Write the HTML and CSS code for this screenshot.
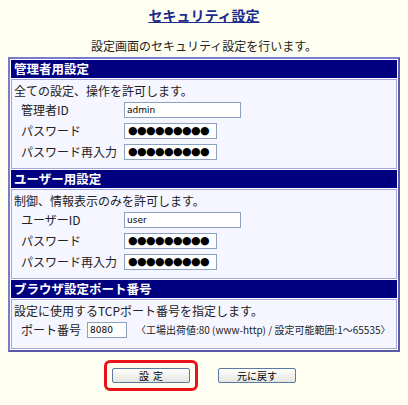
FILE: index.html
```html
<!DOCTYPE html>
<html lang="ja">
<head>
    <meta charset="UTF-8">
    <title>セキュリティ設定</title>
    <link rel="stylesheet" href="styles.css">
</head>
<body>
    <div class="page">
        <h1 class="title">セキュリティ設定</h1>
        <p class="lead">設定画面のセキュリティ設定を行います。</p>

        <div class="panel">
            <div class="sec-head">管理者用設定</div>
            <div class="sec-body">
                <p class="desc">全ての設定、操作を許可します。</p>
                <div class="row">
                    <span class="label">管理者ID</span>
                    <input type="text" class="inp wide" value="admin">
                </div>
                <div class="row">
                    <span class="label">パスワード</span>
                    <input type="text" class="inp pw" value="●●●●●●●●●">
                </div>
                <div class="row">
                    <span class="label">パスワード再入力</span>
                    <input type="text" class="inp pw" value="●●●●●●●●●">
                </div>
            </div>

            <div class="sec-head">ユーザー用設定</div>
            <div class="sec-body">
                <p class="desc">制御、情報表示のみを許可します。</p>
                <div class="row">
                    <span class="label">ユーザーID</span>
                    <input type="text" class="inp wide" value="user">
                </div>
                <div class="row">
                    <span class="label">パスワード</span>
                    <input type="text" class="inp pw" value="●●●●●●●●●">
                </div>
                <div class="row">
                    <span class="label">パスワード再入力</span>
                    <input type="text" class="inp pw" value="●●●●●●●●●">
                </div>
            </div>

            <div class="sec-head">ブラウザ設定ポート番号</div>
            <div class="sec-body short">
                <p class="desc">設定に使用するTCPポート番号を指定します。</p>
                <div class="row">
                    <span class="label port-label">ポート番号</span>
                    <input type="text" class="inp port" value="8080">
                    <span class="note">〈工場出荷値:80 (www-http) / 設定可能範囲:1～65535〉</span>
                </div>
            </div>
        </div>

        <div class="btn-group">
            <span class="highlight"><button type="button" class="btn spaced">設 定</button></span>
            <button type="button" class="btn">元に戻す</button>
        </div>
    </div>
</body>
</html>
```

FILE: styles.css
```css
* {
    margin: 0;
    padding: 0;
    box-sizing: border-box;
}

body {
    font-family: "Noto Sans CJK JP", "DejaVu Sans", sans-serif;
    font-size: 12px;
    color: #222;
    background: #fefff0;
}

.page {
    width: 408px;
    padding: 0 8px;
}

.title {
    text-align: center;
    font-size: 14px;
    font-weight: bold;
    color: #1c2a8c;
    text-decoration: underline;
    line-height: 18px;
    padding-top: 6px;
}

.lead {
    text-align: center;
    line-height: 16px;
    margin-top: 14px;
    margin-bottom: 3px;
}

.panel {
    border: 2px solid #7a7acc;
    border-right-color: #5a5aa8;
    border-bottom-color: #5a5aa8;
    background: #fff;
    padding: 1px;
    display: flex;
    flex-direction: column;
    gap: 1px;
}

.sec-head {
    background: #000080;
    color: #fff;
    font-weight: bold;
    height: 18px;
    line-height: 18px;
    padding-left: 3px;
    font-size: 12.5px;
}

.sec-body {
    background: #f5f6ff;
    border: 1px solid #a6a6d6;
    height: 90px;
    padding: 2px 2px;
}

.sec-body.short {
    height: 50px;
}

.desc {
    line-height: 17px;
}

.row {
    display: flex;
    align-items: center;
    height: 21px;
    padding-left: 7px;
}

.label {
    width: 103px;
}

.port-label {
    width: 66px;
}

.inp {
    height: 16px;
    border: 1px solid #8aa2c0;
    background: #fff;
    font-family: "DejaVu Sans", sans-serif;
    font-size: 9px;
    padding: 0 2px;
    color: #000;
}

.inp.wide {
    width: 117px;
}

.inp.pw {
    width: 93px;
    font-size: 11px;
    letter-spacing: -0.6px;
    padding-left: 3px;
}

.inp.port {
    width: 40px;
}

.note {
    font-size: 10px;
    margin-left: 9px;
    white-space: nowrap;
}

.btn-group {
    display: flex;
    justify-content: center;
    align-items: center;
    gap: 20px;
    margin-top: 8px;
    margin-right: 8px;
}

.highlight {
    border: 3px solid #e8141a;
    border-radius: 6px;
    padding: 5px 5px;
    display: inline-flex;
}

.btn {
    width: 78px;
    height: 15px;
    border: 1px solid #5a7aa0;
    border-radius: 2px;
    background: linear-gradient(#ffffff, #e4e4e0);
    font-family: "Noto Sans CJK JP", sans-serif;
    font-size: 10px;
    line-height: 13px;
    color: #000;
}

.btn.spaced {
    word-spacing: 2px;
}
```
